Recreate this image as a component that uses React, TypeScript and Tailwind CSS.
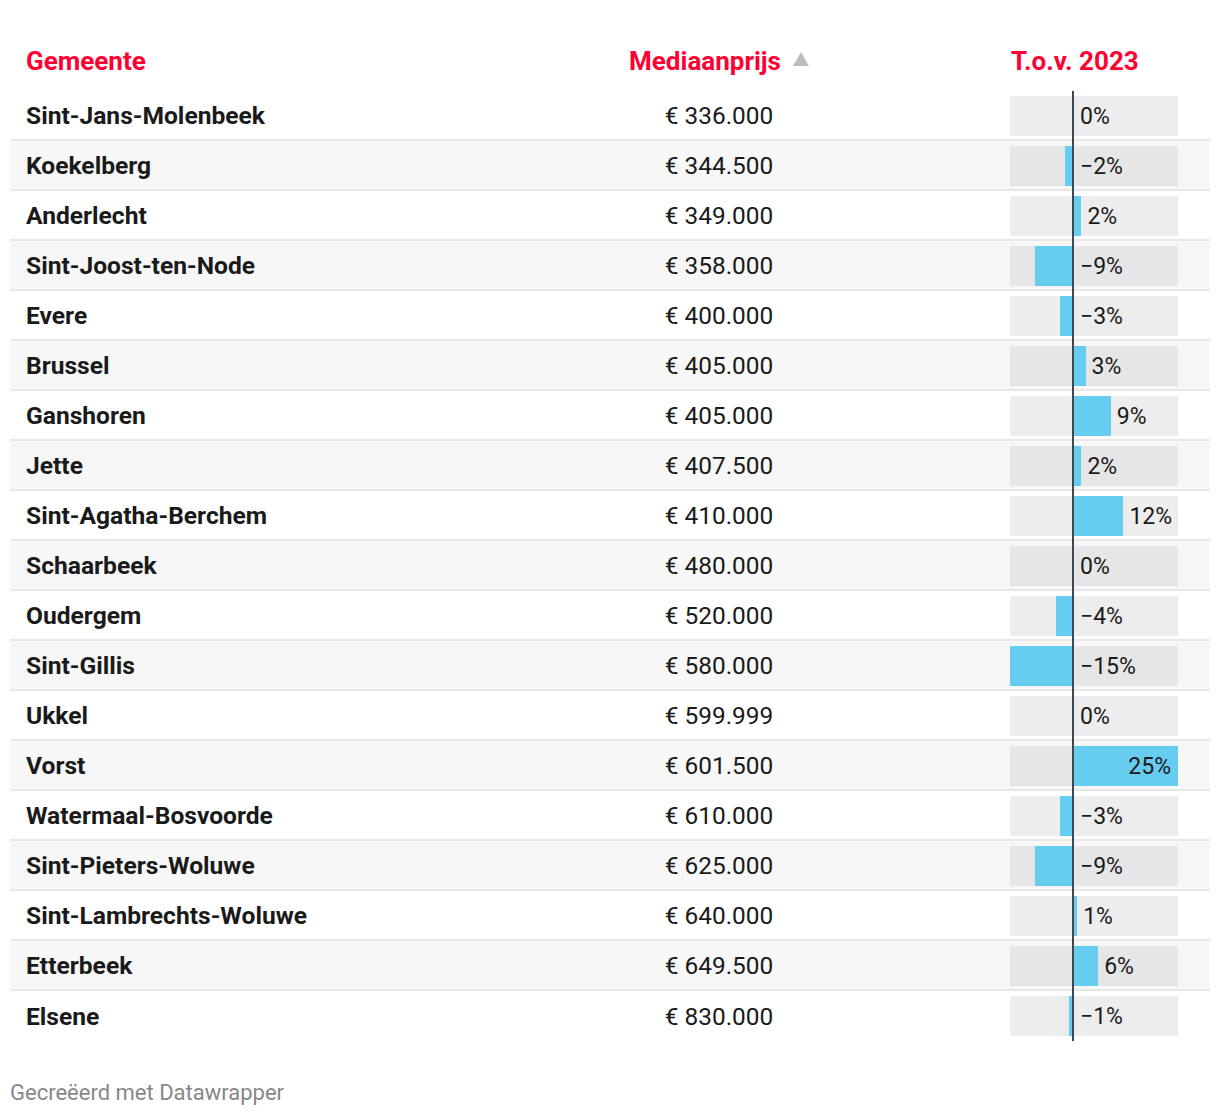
import React from "react";

type Row = { name: string; price: string; change: number };

const rows: Row[] = [
  { name: "Sint-Jans-Molenbeek", price: "€ 336.000", change: 0 },
  { name: "Koekelberg", price: "€ 344.500", change: -2 },
  { name: "Anderlecht", price: "€ 349.000", change: 2 },
  { name: "Sint-Joost-ten-Node", price: "€ 358.000", change: -9 },
  { name: "Evere", price: "€ 400.000", change: -3 },
  { name: "Brussel", price: "€ 405.000", change: 3 },
  { name: "Ganshoren", price: "€ 405.000", change: 9 },
  { name: "Jette", price: "€ 407.500", change: 2 },
  { name: "Sint-Agatha-Berchem", price: "€ 410.000", change: 12 },
  { name: "Schaarbeek", price: "€ 480.000", change: 0 },
  { name: "Oudergem", price: "€ 520.000", change: -4 },
  { name: "Sint-Gillis", price: "€ 580.000", change: -15 },
  { name: "Ukkel", price: "€ 599.999", change: 0 },
  { name: "Vorst", price: "€ 601.500", change: 25 },
  { name: "Watermaal-Bosvoorde", price: "€ 610.000", change: -3 },
  { name: "Sint-Pieters-Woluwe", price: "€ 625.000", change: -9 },
  { name: "Sint-Lambrechts-Woluwe", price: "€ 640.000", change: 1 },
  { name: "Etterbeek", price: "€ 649.500", change: 6 },
  { name: "Elsene", price: "€ 830.000", change: -1 },
];

// scale: -15%..25% over 168px
const PX = 4.2;
const ZERO = 63;

function fmt(v: number) {
  return v < 0 ? `\u2212${Math.abs(v)}%` : `${v}%`;
}

function ChangeBar({ value, striped }: { value: number; striped: boolean }) {
  const w = Math.abs(value) * PX;
  const left = value < 0 ? ZERO - w : ZERO;
  const labelInside = value > 0 && w > 80;
  const labelLeft = value > 0 ? ZERO + w + 6 : ZERO + 7;
  return (
    <div
      className={`relative h-[40px] w-[168px] ${striped ? "bg-[#e6e6e6]" : "bg-[#ededed]"}`}
    >
      <div
        className="absolute top-0 bottom-0 bg-[#67cdf0]"
        style={{ left: `${left}px`, width: `${w}px` }}
      />
      {labelInside ? (
        <span className="absolute right-[7px] top-0 flex h-full items-center pt-[2px] text-[23px] text-[#1a1a1a]">
          {fmt(value)}
        </span>
      ) : (
        <span
          className="absolute top-0 flex h-full items-center pt-[2px] text-[23px] text-[#1a1a1a]"
          style={{ left: `${labelLeft}px` }}
        >
          {fmt(value)}
        </span>
      )}
    </div>
  );
}

export default function App() {
  return (
    <div className="min-h-[1116px] w-[1220px] bg-white px-[10px] pt-[36px] font-['Roboto',sans-serif]">
      {/* header */}
      <div className="mb-[5px] grid h-[50px] grid-cols-[590px_238px_172px_200px] items-center pt-px text-[26px] font-bold text-[#ff0033]">
        <div className="pl-[16px]">Gemeente</div>
        <div className="flex items-center justify-center gap-[12px]">
          <span>Mediaanprijs</span>
          <svg width="16" height="14" viewBox="0 0 16 14" className="mb-[6px]">
            <polygon points="8,0 16,14 0,14" fill="#bdbdbd" />
          </svg>
        </div>
        <div />
        <div className="pl-px">T.o.v. 2023</div>
      </div>

      {/* body */}
      <div className="relative">
        {rows.map((r, i) => {
          const striped = i % 2 === 1;
          const last = i === rows.length - 1;
          return (
            <div
              key={r.name}
              className={`grid h-[50px] grid-cols-[590px_238px_172px_200px] ${
                last ? "" : "border-b-2 border-[#e8e8e8]"
              } ${striped ? "bg-[#f7f7f7]" : "bg-white"}`}
            >
              <div className="flex items-center pl-[16px] pt-[2px] text-[24.6px] font-bold text-[#1a1a1a]">
                {r.name}
              </div>
              <div className="flex items-center justify-center pt-[2px] text-[24.4px] text-[#1a1a1a]">
                {r.price}
              </div>
              <div />
              <div className="pt-[5px]">
                <ChangeBar value={r.change} striped={striped} />
              </div>
            </div>
          );
        })}
        {/* zero line */}
        <div className="absolute top-0 bottom-0 left-[1062px] w-[2px] bg-[#3b4a54]" />
      </div>

      {/* footer */}
      <div className="mt-[40px] pb-[12px] text-[22px] leading-[24px] text-[#888888]">
        Gecreëerd met Datawrapper
      </div>
    </div>
  );
}
